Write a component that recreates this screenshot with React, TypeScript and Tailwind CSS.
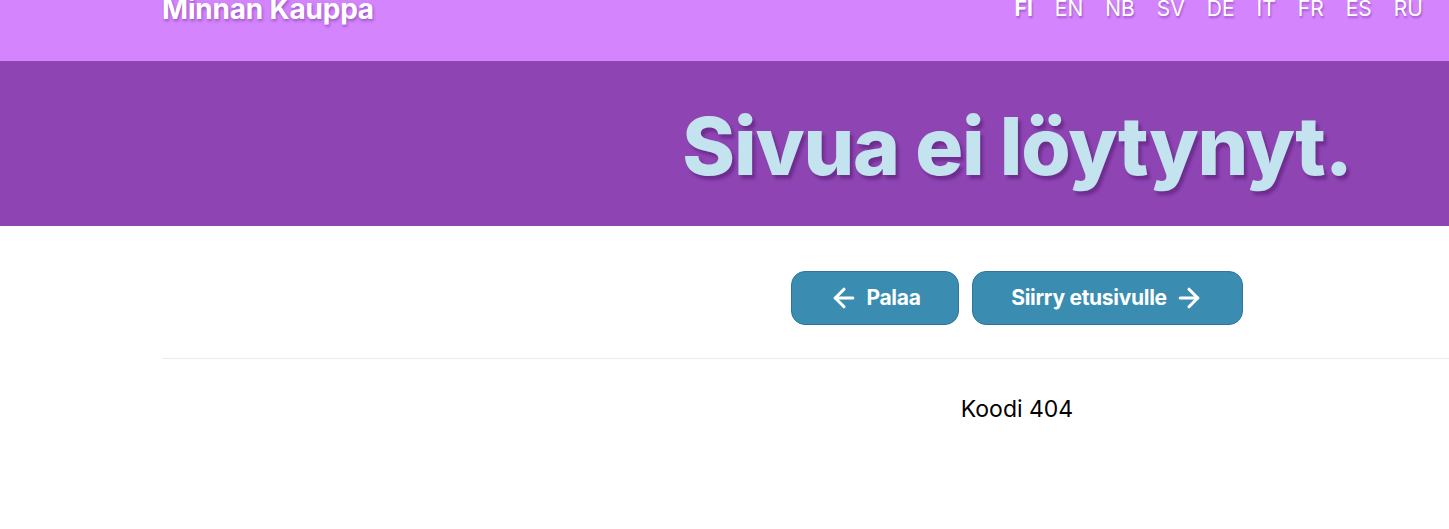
import { ArrowLeft, ArrowRight } from "lucide-react";

const LANGS = ["FI", "EN", "NB", "SV", "DE", "IT", "FR", "ES", "RU"];

export default function App() {
  return (
    <div className="min-h-[529px] overflow-hidden bg-white font-['Inter','Noto_Sans',sans-serif]">
      {/* Top bar */}
      <header className="h-[61px] overflow-hidden bg-[#d484fc]">
        <div className="-mt-[8px] flex items-start justify-between pl-[162px] pr-[26px]">
          <a className="text-[28px] font-bold leading-[34px] tracking-[-0.2px] text-white [text-shadow:1px_2px_3px_rgba(90,30,120,0.45)]">
            Minnan Kauppa
          </a>
          <nav className="mt-[5px] flex gap-[22px] text-[21px] leading-[24px] text-white [text-shadow:1px_2px_2px_rgba(90,30,120,0.4)]">
            {LANGS.map((l, i) => (
              <span key={l} className={i === 0 ? "font-bold" : "font-normal"}>
                {l}
              </span>
            ))}
          </nav>
        </div>
      </header>

      {/* Title band */}
      <section className="h-[165px] bg-[#8e44b3]">
        <div className="ml-[162px] flex h-full w-[1710px] items-center justify-center">
          <h1 className="mt-[4px] font-['Inter',sans-serif] text-[80px] font-extrabold leading-none tracking-[-1.2px] text-[#c3e3ee] [text-shadow:3px_4px_3px_rgba(70,20,100,0.45)]">
            Sivua ei löytynyt.
          </h1>
        </div>
      </section>

      {/* Actions */}
      <div className="ml-[162px] w-[1710px]">
        <div className="flex justify-center gap-[13px] pb-[33px] pt-[45px]">
          <button className="flex h-[54px] w-[168px] items-center justify-center gap-[7px] rounded-[14px] border border-[#2d7699] bg-[#3a8db1] text-[21px] font-bold tracking-[-0.3px] text-white">
            <ArrowLeft className="h-[30px] w-[30px]" strokeWidth={2.5} />
            Palaa
          </button>
          <button className="flex h-[54px] w-[271px] items-center justify-center gap-[7px] rounded-[14px] border border-[#2d7699] bg-[#3a8db1] text-[21px] font-bold tracking-[-0.3px] text-white">
            Siirry etusivulle
            <ArrowRight className="h-[30px] w-[30px]" strokeWidth={2.5} />
          </button>
        </div>
        <hr className="border-t border-[#ececec]" />
        <p className="pt-[36px] text-center text-[23px] leading-[28px] text-black">Koodi 404</p>
      </div>
    </div>
  );
}
